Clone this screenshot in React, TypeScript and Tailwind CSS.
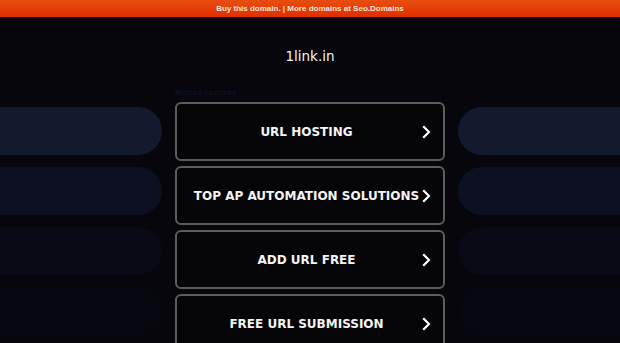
import React from 'react';

const links = ['URL HOSTING', 'TOP AP AUTOMATION SOLUTIONS', 'ADD URL FREE', 'FREE URL SUBMISSION'];
const pills = ['bg-[#141a2e]', 'bg-[#0d1021]', 'bg-[#090a16]', 'bg-[#06070f]'];

const Chevron = () => (
  <svg width="9" height="14" viewBox="0 0 9 14" className="shrink-0">
    <path d="M2 2l5 5-5 5" fill="none" stroke="#fff" strokeWidth="2.2" strokeLinecap="square" />
  </svg>
);

export default function App() {
  return (
    <div className="w-[620px] h-[343px] overflow-hidden bg-[#06060c] font-['DejaVu_Sans',sans-serif]">
      <div className="h-[17px] bg-gradient-to-b from-[#e84e0f] to-[#e02c02] flex items-center justify-center text-[8px] font-bold text-[#f6e4d8] font-['Liberation_Sans',sans-serif] leading-none">
        Buy this domain. | More domains at Seo.Domains
      </div>
      <div className="h-px bg-black" />
      <div className="h-[72px] flex items-center justify-center text-[13.5px] text-[#f2f2f2] pt-[4px]">1link.in</div>
      <div className="flex">
        <div className="w-[175px] flex flex-col pt-[17px] gap-[12px]">
          {pills.map((c, i) => (
            <div key={i} className={`w-[162px] h-[48px] rounded-r-full ${c}`} />
          ))}
        </div>
        <div className="w-[270px] flex flex-col">
          <div className="h-[12px] text-[7px] text-[#15162a] leading-none">Related Searches</div>
          <div className="flex flex-col gap-[5px]">
            {links.map((t) => (
              <div key={t} className="h-[59px] border-2 border-[#5c5c5c] rounded-[6px] bg-[#050508] flex items-center pl-[14px] pr-[12px]">
                <span className="flex-1 text-center text-[12px] font-bold text-[#f4f4f4] whitespace-nowrap">{t}</span>
                <Chevron />
              </div>
            ))}
          </div>
        </div>
        <div className="flex-1 flex flex-col items-end pt-[17px] gap-[12px]">
          {pills.map((c, i) => (
            <div key={i} className={`w-[162px] h-[48px] rounded-l-full ${c}`} />
          ))}
        </div>
      </div>
    </div>
  );
}
